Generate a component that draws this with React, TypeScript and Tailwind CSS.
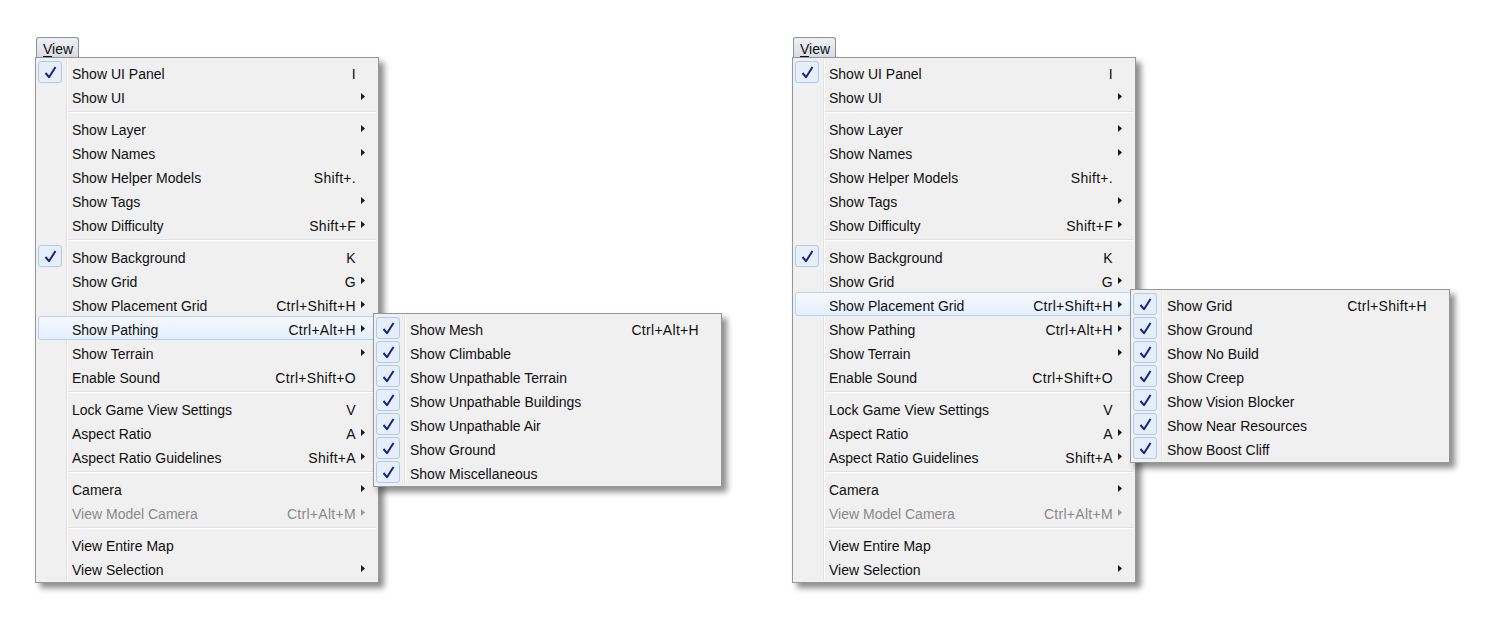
import React from 'react';

type Item =
  | { sep: true }
  | {
      sep?: false;
      label: string;
      shortcut?: string;
      checked?: boolean;
      arrow?: boolean;
      disabled?: boolean;
      active?: boolean;
    };

const mainItems = (active: string): Item[] => [
  { label: 'Show UI Panel', shortcut: 'I', checked: true },
  { label: 'Show UI', arrow: true },
  { sep: true },
  { label: 'Show Layer', arrow: true },
  { label: 'Show Names', arrow: true },
  { label: 'Show Helper Models', shortcut: 'Shift+.' },
  { label: 'Show Tags', arrow: true },
  { label: 'Show Difficulty', shortcut: 'Shift+F', arrow: true },
  { sep: true },
  { label: 'Show Background', shortcut: 'K', checked: true },
  { label: 'Show Grid', shortcut: 'G', arrow: true },
  { label: 'Show Placement Grid', shortcut: 'Ctrl+Shift+H', arrow: true, active: active === 'Show Placement Grid' },
  { label: 'Show Pathing', shortcut: 'Ctrl+Alt+H', arrow: true, active: active === 'Show Pathing' },
  { label: 'Show Terrain', arrow: true },
  { label: 'Enable Sound', shortcut: 'Ctrl+Shift+O' },
  { sep: true },
  { label: 'Lock Game View Settings', shortcut: 'V' },
  { label: 'Aspect Ratio', shortcut: 'A', arrow: true },
  { label: 'Aspect Ratio Guidelines', shortcut: 'Shift+A', arrow: true },
  { sep: true },
  { label: 'Camera', arrow: true },
  { label: 'View Model Camera', shortcut: 'Ctrl+Alt+M', arrow: true, disabled: true },
  { sep: true },
  { label: 'View Entire Map' },
  { label: 'View Selection', arrow: true },
];

const pathingItems: Item[] = [
  { label: 'Show Mesh', shortcut: 'Ctrl+Alt+H', checked: true },
  { label: 'Show Climbable', checked: true },
  { label: 'Show Unpathable Terrain', checked: true },
  { label: 'Show Unpathable Buildings', checked: true },
  { label: 'Show Unpathable Air', checked: true },
  { label: 'Show Ground', checked: true },
  { label: 'Show Miscellaneous', checked: true },
];

const placementItems: Item[] = [
  { label: 'Show Grid', shortcut: 'Ctrl+Shift+H', checked: true },
  { label: 'Show Ground', checked: true },
  { label: 'Show No Build', checked: true },
  { label: 'Show Creep', checked: true },
  { label: 'Show Vision Blocker', checked: true },
  { label: 'Show Near Resources', checked: true },
  { label: 'Show Boost Cliff', checked: true },
];

function Check() {
  return (
    <div className="w-[24px] h-[22px] shrink-0 rounded-[3px] border border-[#aecbee] bg-[#e6eef9] flex items-center justify-center">
      <svg width="13" height="13" viewBox="0 0 13 13">
        <path d="M1.5 7 L5 11.2 L11.5 1" fill="none" stroke="#16238a" strokeWidth="2" strokeLinejoin="round" />
      </svg>
    </div>
  );
}

function Row({ item }: { item: Exclude<Item, { sep: true }> }) {
  const color = item.disabled ? 'text-[#8a8a8a]' : 'text-[#0f0f0f]';
  return (
    <div
      className={
        'relative h-[24px] flex items-center rounded-[3px] border ' +
        (item.active
          ? 'border-[#b4d2f4] bg-gradient-to-b from-[#f5f9fe] to-[#e5effb]'
          : 'border-transparent')
      }
    >
      <div className="w-[24px] flex items-center justify-center -ml-px">{item.checked && <Check />}</div>
      <span className={'ml-[10px] pt-[3px] flex-1 whitespace-nowrap ' + color}>{item.label}</span>
      {item.shortcut && (
        <span className={'pt-[3px] whitespace-nowrap tracking-[0.3px] ' + color}>{item.shortcut}</span>
      )}
      <div className="w-[19px] h-full flex items-center pl-[5px] pt-px shrink-0">
        {item.arrow && (
          <svg width="4" height="7" viewBox="0 0 4 7">
            <path d="M0 0 L4 3.5 L0 7 Z" fill={item.disabled ? '#9a9a9a' : '#1a1a1a'} />
          </svg>
        )}
      </div>
    </div>
  );
}

function Menu({ items, className }: { items: Item[]; className?: string }) {
  return (
    <div
      className={
        'relative bg-[#f0f0f0] border border-[#979797] p-[2px] shadow-[5px_5px_6px_rgba(0,0,0,0.45)] ' +
        (className || '')
      }
    >
      <div className="absolute left-[30px] top-[2px] bottom-[2px] w-[2px] border-l border-[#e2e3e3] border-r border-r-white" />
      {items.map((it, i) =>
        it.sep ? (
          <div key={i} className="relative h-[8px] flex flex-col justify-center pl-[30px]">
            <div className="h-px bg-[#e0e0e0]" />
            <div className="h-px bg-white" />
          </div>
        ) : (
          <Row key={i} item={it} />
        )
      )}
    </div>
  );
}

function MenuGroup({ active, sub, subTop, subWidth }: { active: string; sub: Item[]; subTop: string; subWidth: string }) {
  return (
    <div className="relative w-[344px] shrink-0">
      <div className="ml-px w-[43px] h-[20px] rounded-t-[3px] border border-b-0 border-[#8f9092] bg-gradient-to-b from-[#eef0f3] to-[#d9dee5] flex items-center pl-[6px] pt-[3px] text-[#0f0f0f]">
        <span>
          <span className="underline underline-offset-2">V</span>iew
        </span>
      </div>
      <Menu items={mainItems(active)} className="w-[344px]" />
      <div className={'absolute left-[338px] z-10 ' + subTop}>
        <Menu items={sub} className={subWidth} />
      </div>
    </div>
  );
}

export default function App() {
  return (
    <div
      className="w-[1485px] h-[619px] bg-white flex pt-[37px] pl-[35px] text-[14px] leading-none"
      style={{ fontFamily: '"Liberation Sans", Arial, sans-serif' }}
    >
      <MenuGroup active="Show Pathing" sub={pathingItems} subTop="top-[276px]" subWidth="w-[349px]" />
      <div className="ml-[413px]">
        <MenuGroup active="Show Placement Grid" sub={placementItems} subTop="top-[252px]" subWidth="w-[320px]" />
      </div>
    </div>
  );
}
